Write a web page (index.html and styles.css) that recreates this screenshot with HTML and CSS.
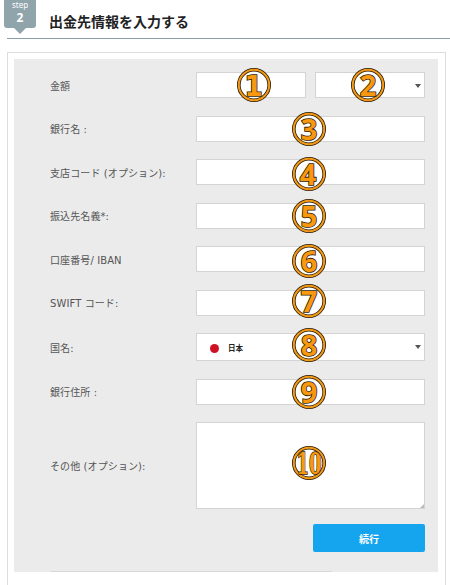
FILE: index.html
```html
<!DOCTYPE html>
<html lang="ja">
<head>
    <meta charset="UTF-8">
    <meta name="viewport" content="width=device-width, initial-scale=1.0">
    <title>出金先情報を入力する</title>
    <link rel="stylesheet" href="styles.css">
</head>
<body>

    <!-- 見出し -->
    <header class="step-header">
        <div class="step-badge">
            <span class="step-label">step</span>
            <span class="step-number">2</span>
        </div>
        <h2>出金先情報を入力する</h2>
    </header>

    <div class="container">
        <form class="panel">
            <div class="row">
                <label>金額</label>
                <div class="split">
                    <div class="field">
                        <svg class="mark mark-right" viewBox="0 0 34 34"><circle class="ring-dark" cx="17" cy="17" r="15.2"/><circle class="ring" cx="17" cy="17" r="15.2"/><text class="one" x="16.5" y="27.5">1</text></svg>
                    </div>
                    <div class="field select">
                        <svg class="mark" viewBox="0 0 34 34"><circle class="ring-dark" cx="17" cy="17" r="15.2"/><circle class="ring" cx="17" cy="17" r="15.2"/><text x="17" y="27.5">2</text></svg>
                    </div>
                </div>
            </div>

            <div class="row">
                <label>銀行名 :</label>
                <div class="field">
                    <svg class="mark" viewBox="0 0 34 34"><circle class="ring-dark" cx="17" cy="17" r="15.2"/><circle class="ring" cx="17" cy="17" r="15.2"/><text x="17" y="27.5">3</text></svg>
                </div>
            </div>

            <div class="row">
                <label>支店コード (オプション):</label>
                <div class="field">
                    <svg class="mark mark-low" viewBox="0 0 34 34"><circle class="ring-dark" cx="17" cy="17" r="15.2"/><circle class="ring" cx="17" cy="17" r="15.2"/><text x="16" y="27.5">4</text></svg>
                </div>
            </div>

            <div class="row">
                <label>振込先名義*:</label>
                <div class="field">
                    <svg class="mark" viewBox="0 0 34 34"><circle class="ring-dark" cx="17" cy="17" r="15.2"/><circle class="ring" cx="17" cy="17" r="15.2"/><text x="17" y="27.5">5</text></svg>
                </div>
            </div>

            <div class="row">
                <label>口座番号/ IBAN</label>
                <div class="field">
                    <svg class="mark mark-low" viewBox="0 0 34 34"><circle class="ring-dark" cx="17" cy="17" r="15.2"/><circle class="ring" cx="17" cy="17" r="15.2"/><text x="17" y="27.5">6</text></svg>
                </div>
            </div>

            <div class="row">
                <label>SWIFT コード:</label>
                <div class="field">
                    <svg class="mark mark-high" viewBox="0 0 34 34"><circle class="ring-dark" cx="17" cy="17" r="15.2"/><circle class="ring" cx="17" cy="17" r="15.2"/><text x="17" y="27.5">7</text></svg>
                </div>
            </div>

            <div class="row row-country">
                <label>国名:</label>
                <div class="field select country">
                    <span class="flag"></span>
                    <span class="country-name">日本</span>
                    <svg class="mark mark-high" viewBox="0 0 34 34"><circle class="ring-dark" cx="17" cy="17" r="15.2"/><circle class="ring" cx="17" cy="17" r="15.2"/><text x="17" y="27.5">8</text></svg>
                </div>
            </div>

            <div class="row">
                <label>銀行住所 :</label>
                <div class="field">
                    <svg class="mark" viewBox="0 0 34 34"><circle class="ring-dark" cx="17" cy="17" r="15.2"/><circle class="ring" cx="17" cy="17" r="15.2"/><text x="17" y="27.5">9</text></svg>
                </div>
            </div>

            <div class="row row-memo">
                <label>その他 (オプション):</label>
                <div class="field memo">
                    <svg class="mark mark-memo" viewBox="0 0 34 34"><circle class="ring-dark" cx="17" cy="17" r="15.2"/><circle class="ring" cx="17" cy="17" r="15.2"/><text class="ten" x="17" y="27.5" textLength="25" lengthAdjust="spacingAndGlyphs">10</text></svg>
                </div>
            </div>

            <button type="button">続行</button>
            <div class="divider"></div>
        </form>
    </div>

</body>
</html>
```
FILE: styles.css
```css
* {
    box-sizing: border-box;
}
body {
    font-family: "Noto Sans", "Noto Sans CJK JP", sans-serif;
    margin: 0;
    height: 585px;
    overflow: hidden;
    background-color: white;
}
.step-header {
    display: flex;
    height: 39px;
    margin-left: 7px;
    border-bottom: 1px solid #8b9fa8;
}
.step-badge {
    position: relative;
    width: 32px;
    height: 28px;
    margin-left: -3px;
    background-color: #90a4ab;
    border-radius: 0 0 3px 3px;
    color: white;
    text-align: center;
}
.step-badge::after {
    content: "";
    position: absolute;
    left: 10px;
    top: 28px;
    border: 6px solid transparent;
    border-top-color: #90a4ab;
    border-bottom: 0;
}
.step-label {
    display: block;
    font-size: 8px;
    line-height: 10px;
}
.step-number {
    display: block;
    font-size: 12px;
    font-weight: bold;
    line-height: 16px;
}
h2 {
    margin: 11px 0 0 13px;
    font-family: "Noto Sans CJK JP", sans-serif;
    font-size: 14px;
    line-height: 21px;
    color: #222;
}
.container {
    width: 439px;
    height: 560px;
    margin: 13px 0 0 7px;
    padding: 6px;
    border: 1px solid #ddd;
}
.panel {
    display: flex;
    flex-direction: column;
    width: 424px;
    height: 513px;
    padding: 13px 13px 0 36px;
    background-color: #ebebeb;
}
.row {
    display: flex;
    align-items: center;
    height: 26px;
    margin-bottom: 17.5px;
}
label {
    width: 146px;
    padding-top: 3px;
    font-family: "DejaVu Sans", "Noto Sans CJK JP", sans-serif;
    font-size: 10px;
    letter-spacing: 0.1px;
    line-height: 16px;
    color: #555;
    white-space: nowrap;
}
.split {
    display: flex;
    gap: 9px;
}
.field {
    position: relative;
    width: 229px;
    height: 26px;
    background-color: white;
    border: 1px solid #d4d4d4;
}
.split .field {
    width: 110px;
}
.select::after {
    content: "";
    position: absolute;
    right: 3px;
    top: 11px;
    border: 3px solid transparent;
    border-top: 4px solid #555;
    border-bottom: 0;
}
.row-country {
    height: 28px;
}
.country {
    display: flex;
    align-items: center;
    height: 28px;
    padding-left: 13px;
}
.flag {
    width: 9px;
    height: 9px;
    margin-top: 2px;
    border-radius: 50%;
    background-color: #cf1126;
}
.country-name {
    margin-left: 9px;
    font-size: 7.5px;
    font-weight: bold;
    color: #222;
}
.row-memo {
    height: 87px;
    margin-bottom: 15px;
}
.memo {
    height: 87px;
}
.memo::after {
    content: "";
    position: absolute;
    right: 0;
    bottom: 0;
    border: 2px solid #bbb;
    border-top-color: transparent;
    border-left-color: transparent;
}

/* 番号マーク */
.mark {
    position: absolute;
    left: 50%;
    top: 50%;
    width: 34px;
    height: 34px;
    margin: -17px 0 0 -19px;
    overflow: visible;
    z-index: 1;
}
.mark-right {
    margin-left: -14px;
}
.mark-low {
    margin-top: -15px;
}
.mark-high {
    margin-top: -19px;
}
.mark-memo {
    margin-top: -20px;
}
.mark circle {
    fill: none;
}
.mark .ring-dark {
    fill: white;
    stroke: #2a1a06;
    stroke-width: 3.6;
}
.mark .ring {
    stroke: #f29a18;
    stroke-width: 2;
}
.mark text {
    font-family: "Noto Sans", sans-serif;
    font-size: 29px;
    font-weight: bold;
    text-anchor: middle;
    fill: #f7980f;
    stroke: #2a1a06;
    stroke-width: 1.6;
    paint-order: stroke;
}
.mark .one {
    font-family: "DejaVu Sans", sans-serif;
    font-stretch: condensed;
}
.mark .ten {
    font-family: "DejaVu Serif", serif;
}
button {
    align-self: flex-end;
    width: 112px;
    height: 28px;
    padding: 0;
    background-color: #15a5ee;
    color: white;
    border: none;
    border-radius: 2px;
    font-family: "Noto Sans CJK JP", sans-serif;
    font-size: 10px;
    font-weight: bold;
}
.divider {
    width: 282px;
    height: 1px;
    margin-top: auto;
    background-color: #d8d8d8;
}
```
